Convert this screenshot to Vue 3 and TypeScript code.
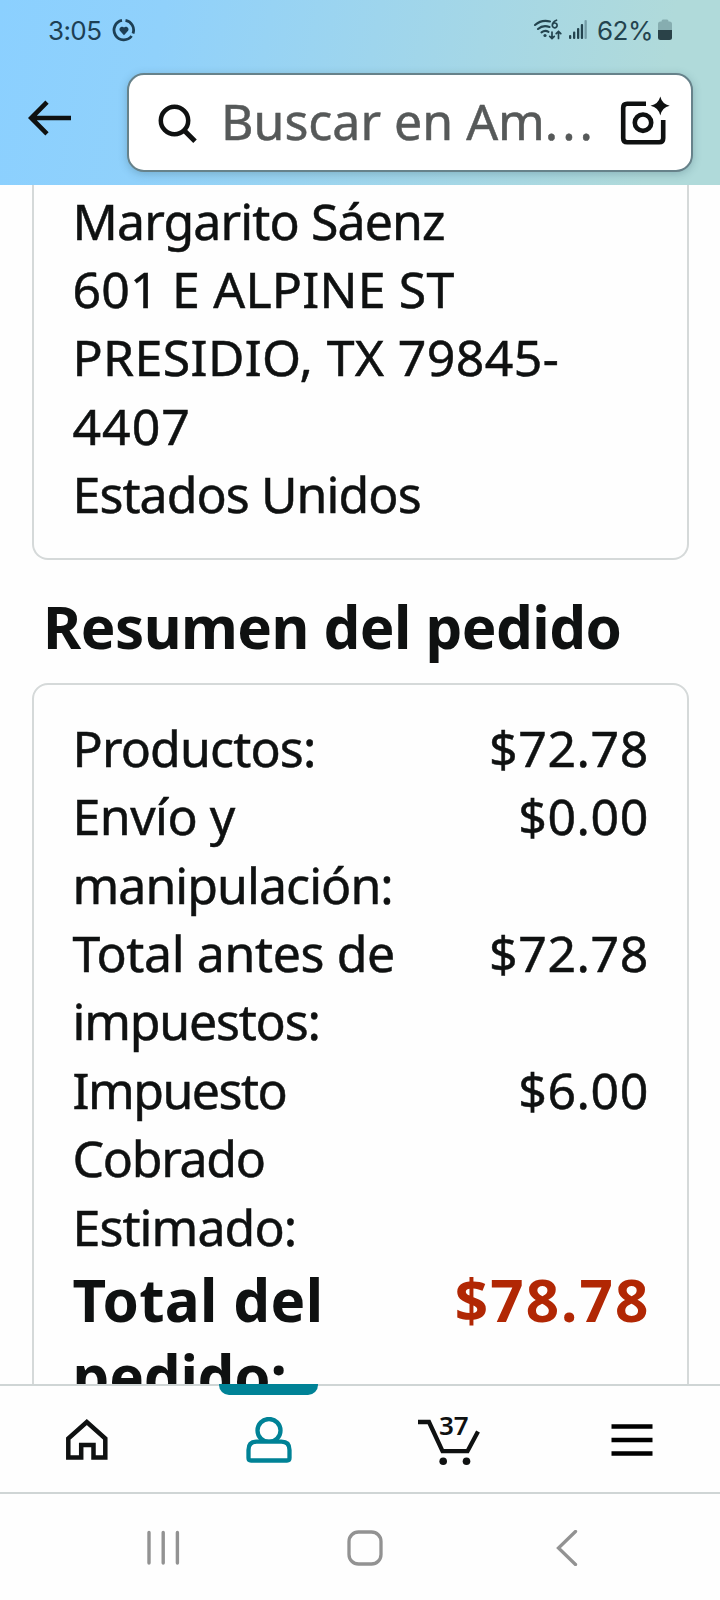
<script setup lang="ts">
interface Line {
  text: string
  tracking: number
}
interface Row {
  label: Line[]
  amount: Line
}

const address: Line[] = [
  { text: 'Margarito Sáenz', tracking: -0.87 },
  { text: '601 E ALPINE ST', tracking: 0.2 },
  { text: 'PRESIDIO, TX 79845-', tracking: 0.37 },
  { text: '4407', tracking: 1 },
  { text: 'Estados Unidos', tracking: -0.92 },
]

const rows: Row[] = [
  { label: [{ text: 'Productos:', tracking: -0.85 }], amount: { text: '$72.78', tracking: 0.6 } },
  {
    label: [{ text: 'Envío y', tracking: -0.5 }, { text: 'manipulación:', tracking: -0.95 }],
    amount: { text: '$0.00', tracking: 0.6 },
  },
  {
    label: [{ text: 'Total antes de', tracking: -0.38 }, { text: 'impuestos:', tracking: -1.2 }],
    amount: { text: '$72.78', tracking: 0.6 },
  },
  {
    label: [
      { text: 'Impuesto', tracking: -1.5 },
      { text: 'Cobrado', tracking: -1.3 },
      { text: 'Estimado:', tracking: -0.9 },
    ],
    amount: { text: '$6.00', tracking: 0.6 },
  },
]

const total: Row = {
  label: [{ text: 'Total del', tracking: 0.35 }, { text: 'pedido:', tracking: -0.2 }],
  amount: { text: '$78.78', tracking: 2.1 },
}

const spacing = (line: Line) => ({ letterSpacing: `${line.tracking}px` })
</script>

<template>
  <div class="screen">
    <header class="top">
      <div class="status">
        <span class="clock">3:05</span>
        <svg class="health" width="24" height="24" viewBox="0 0 24 24">
          <g fill="none" stroke="#1d3f54" stroke-width="2.8">
            <path d="M10 2.4A9.8 9.8 0 1 0 19.6 18" />
            <path d="M13.5 2.4A9.8 9.8 0 0 1 21 15.4" />
          </g>
          <path d="M12 17.2L7.9 12.7C6.2 10.3 9.8 7 12 9.6C14.2 7 17.8 10.3 16.1 12.7Z" fill="#1d3f54" />
        </svg>
        <svg class="signals" width="56" height="24" viewBox="0 0 56 24">
          <g fill="none" stroke="#24444f" stroke-width="2.1" stroke-linecap="round">
            <path d="M2 7Q8.500 1.300 17 3.500" />
            <path d="M5 11Q10 6.500 16.500 9" />
            <path d="M8.500 14.300Q12 11.800 15.500 13.800" />
            <path d="M23.500 2.200Q19.300 3.800 19.300 7.300A2.400 2.400 0 1 0 21.700 5Q20 5 19.400 7" stroke-width="1.700" />
            <path d="M19 14V20.500M16.700 18.300L19 20.600L21.300 18.300M25.500 20.500V13.500M23.200 15.700L25.500 13.400L27.800 15.700" stroke-width="1.700" />
          </g>
          <circle cx="12" cy="17.500" r="1.600" fill="#24444f" />
          <g fill="#24444f">
            <rect x="36" y="17" width="2.300" height="4" rx="1" />
            <rect x="40" y="13.500" width="2.300" height="7.500" rx="1" />
            <rect x="44" y="10" width="2.300" height="11" rx="1" />
            <rect x="47.800" y="6" width="2.300" height="15" rx="1" />
            <rect x="51.500" y="2" width="2.300" height="19" rx="1" opacity="0.4" />
          </g>
        </svg>
        <span class="percent">62%</span>
        <svg class="battery" width="16" height="22" viewBox="0 0 16 22">
          <path d="M1 11V5Q1 2.500 3.500 2.500H4.500Q4.500 0.500 6 0.500H10Q11.500 0.500 11.500 2.500H12.500Q15 2.500 15 5V11Z" fill="#86adb0" />
          <path d="M1 11H15V18.500Q15 21 12.500 21H3.500Q1 21 1 18.500Z" fill="#2a4248" />
        </svg>
      </div>
      <div class="bar">
        <svg class="back" width="44" height="36" viewBox="0 0 44 36">
          <path d="M43 18H3M19 2.200L3.200 18L19 33.800" fill="none" stroke="#0f1111" stroke-width="4.600" />
        </svg>
        <div class="search">
          <svg class="lens" width="40" height="40" viewBox="0 0 40 40">
            <circle cx="16.500" cy="16.500" r="13.700" fill="none" stroke="#0f1111" stroke-width="4.500" />
            <path d="M26 26.300L37 37.300" stroke="#0f1111" stroke-width="5" />
          </svg>
          <span class="hint">Buscar en Am<span class="dots">...</span></span>
          <svg class="camera" width="50" height="50" viewBox="0 0 50 50">
            <g fill="none" stroke="#0f1111" stroke-width="4.600">
              <path d="M26 7.700H7.200Q3.200 7.700 3.200 11.700V42.200Q3.200 46.200 7.200 46.200H39.200Q43.200 46.200 43.200 42.200V24" />
              <circle cx="23" cy="26.700" r="8.200" />
            </g>
            <path d="M40.300 0.500Q42 8 49.700 9.800Q42 11.500 40.300 19.500Q38.500 11.500 30.500 9.800Q38.500 8 40.300 0.500Z" fill="#0f1111" />
          </svg>
        </div>
      </div>
    </header>

    <main class="content">
      <section class="card shipping">
        <div v-for="line in address" :key="line.text" class="line">
          <span :style="spacing(line)">{{ line.text }}</span>
        </div>
      </section>
      <h2 class="title">Resumen del pedido</h2>
      <section class="card summary">
        <div v-for="(row, i) in rows" :key="i" class="row">
          <div>
            <div v-for="line in row.label" :key="line.text" class="line">
              <span :style="spacing(line)">{{ line.text }}</span>
            </div>
          </div>
          <span class="line" :style="spacing(row.amount)">{{ row.amount.text }}</span>
        </div>
        <div class="row total">
          <div>
            <div v-for="line in total.label" :key="line.text" class="line">
              <span :style="spacing(line)">{{ line.text }}</span>
            </div>
          </div>
          <span class="line price" :style="spacing(total.amount)">{{ total.amount.text }}</span>
        </div>
      </section>
    </main>

    <nav class="tabs">
      <div class="tab">
        <svg class="home" width="42" height="42" viewBox="0 0 42 42">
          <path d="M2.300 38.500V19.500L20.800 3L39.300 19.500V38.500H27.500V26H15.200V38.500Z" fill="none" stroke="#0f1111" stroke-width="4.500" />
        </svg>
      </div>
      <div class="tab active">
        <svg class="person" width="46" height="46" viewBox="0 0 46 46">
          <g fill="none" stroke="#008296" stroke-width="4.300">
            <circle cx="23" cy="13.500" r="11.500" />
            <path d="M10.500 24.700H35.500Q43.500 24.700 43.500 33V41Q43.500 43.500 41 43.500H5Q2.500 43.500 2.500 41V33Q2.500 24.700 10.500 24.700Z" fill="#fff" />
          </g>
        </svg>
      </div>
      <div class="tab cart">
        <svg width="64" height="52" viewBox="0 0 64 52">
          <path d="M1 6H12L25.500 35.200H50.500L61 15.500" fill="none" stroke="#0f1111" stroke-width="4.300" />
          <circle cx="26.200" cy="45.200" r="3.800" fill="#0f1111" />
          <circle cx="49.500" cy="45.200" r="3.800" fill="#0f1111" />
        </svg>
        <span class="count">37</span>
      </div>
      <div class="tab">
        <svg class="menu" width="42" height="34" viewBox="0 0 42 34">
          <path d="M0.500 3.500H41.500M0.500 17H41.500M0.500 30.500H41.500" stroke="#000" stroke-width="4.300" />
        </svg>
      </div>
    </nav>

    <footer class="system">
      <svg width="34" height="36" viewBox="0 0 34 36">
        <path d="M3 2.500V33M17.200 2.500V33M31.400 2.500V33" stroke="#929292" stroke-width="3.400" stroke-linecap="round" />
      </svg>
      <svg class="home-key" width="36" height="36" viewBox="0 0 36 36">
        <rect x="2" y="2" width="32" height="32" rx="9.500" fill="none" stroke="#929292" stroke-width="3.300" />
      </svg>
      <svg width="22" height="36" viewBox="0 0 22 36">
        <path d="M19.500 1.500L2.500 18L19.500 34.500" fill="none" stroke="#929292" stroke-width="3.300" stroke-linecap="round" />
      </svg>
    </footer>
  </div>
</template>

<style>
body {
  margin: 0;
  background: #fefefe;
}
</style>

<style scoped>
.screen {
  width: 720px;
  height: 1600px;
  display: flex;
  flex-direction: column;
  overflow: hidden;
  background: #fefefe;
  color: #0f1111;
  font-family: "Noto Sans", "Open Sans", sans-serif;
}
svg {
  display: block;
  flex: none;
}
.top {
  flex: none;
  height: 185px;
  box-sizing: border-box;
  background: linear-gradient(100deg, #8bd0ff 0%, #90d1fb 22%, #a5d7e6 65%, #b0dada 90%, #b0dada 100%);
}
.status {
  display: flex;
  align-items: center;
  height: 60px;
  padding-left: 48px;
  font-family: Inter, Roboto, sans-serif;
  font-size: 26px;
  color: #1d3f54;
}
.clock {
  width: 64px;
  letter-spacing: -0.6px;
}
.signals {
  margin-left: 397px;
}
.percent {
  width: 59px;
  margin-left: 8px;
  color: #24444f;
  letter-spacing: -0.5px;
}
.battery {
  margin-left: 1px;
}
.bar {
  display: flex;
  align-items: flex-start;
  padding: 13px 27px 0 28px;
}
.back {
  margin-top: 27px;
}
.search {
  display: flex;
  align-items: center;
  width: 566px;
  height: 99px;
  box-sizing: border-box;
  margin-left: 55px;
  padding: 0 21px 0 29px;
  border: 2px solid #67828a;
  border-radius: 17px;
  background: #fff;
  box-shadow: 0 2px 8px rgba(40, 80, 95, 0.28);
}
.lens {
  margin-top: 2px;
}
.hint {
  flex: 1;
  margin: -3px 0 0 23px;
  font-size: 50px;
  line-height: 90px;
  color: #565959;
  white-space: nowrap;
  -webkit-text-stroke: 0.5px currentColor;
}
.dots {
  letter-spacing: 3.900px;
}
.camera {
  margin-top: -3px;
}
.content {
  flex: none;
  height: 1199px;
  padding: 0 32px;
  overflow: hidden;
}
.card {
  box-sizing: border-box;
  width: 657px;
  border: 2px solid #d5d9d9;
  padding: 0 38px 0 38.500px;
}
.shipping {
  border-top: 0;
  border-radius: 0 0 16px 16px;
  padding-top: 1.500px;
  padding-bottom: 29.500px;
}
.line {
  font-size: 50px;
  line-height: 68.400px;
  white-space: nowrap;
  -webkit-text-stroke: 0.5px currentColor;
}
.title {
  margin: 29px 0 18px 11px;
  font-size: 58.300px;
  line-height: 76px;
  font-weight: 700;
  letter-spacing: -0.55px;
  white-space: nowrap;
}
.summary {
  height: 760px;
  border-radius: 16px 16px 0 0;
  padding-top: 28.700px;
}
.row {
  display: flex;
  justify-content: space-between;
  align-items: flex-start;
}
.total {
  padding-top: 0.800px;
}
.total .line {
  font-size: 58.300px;
  line-height: 76px;
  font-weight: 700;
  -webkit-text-stroke: 0;
}
.total .price {
  margin-right: -1.500px;
  color: #b12704;
}
.tabs {
  flex: none;
  display: flex;
  height: 110px;
  box-sizing: border-box;
  border-top: 2px solid #cfd5d5;
  border-bottom: 2px solid #cfd5d5;
  background: #fefefe;
}
.tab {
  position: relative;
  flex: 0 0 181.500px;
  display: flex;
  justify-content: center;
  align-items: flex-start;
}
.tabs .tab:first-child {
  flex-basis: 174px;
}
.tabs .tab:last-child {
  flex: 1;
}
.active::before {
  content: "";
  position: absolute;
  top: -2px;
  left: 45px;
  width: 99px;
  height: 11px;
  border-radius: 0 0 10px 10px;
  background: #008296;
}
.home {
  margin-top: 33px;
}
.person {
  margin-top: 31px;
  margin-left: 8px;
}
.cart svg {
  margin: 30px 0 0 6px;
}
.count {
  position: absolute;
  top: 21px;
  left: 83.500px;
  font-size: 26px;
  line-height: 36px;
  font-weight: 600;
}
.menu {
  margin: 37px 0 0 7px;
}
.system {
  flex: 1;
  display: flex;
  justify-content: space-between;
  align-items: flex-start;
  padding: 36px 142px 0 146px;
}
.home-key {
  margin-right: 7px;
}
</style>
